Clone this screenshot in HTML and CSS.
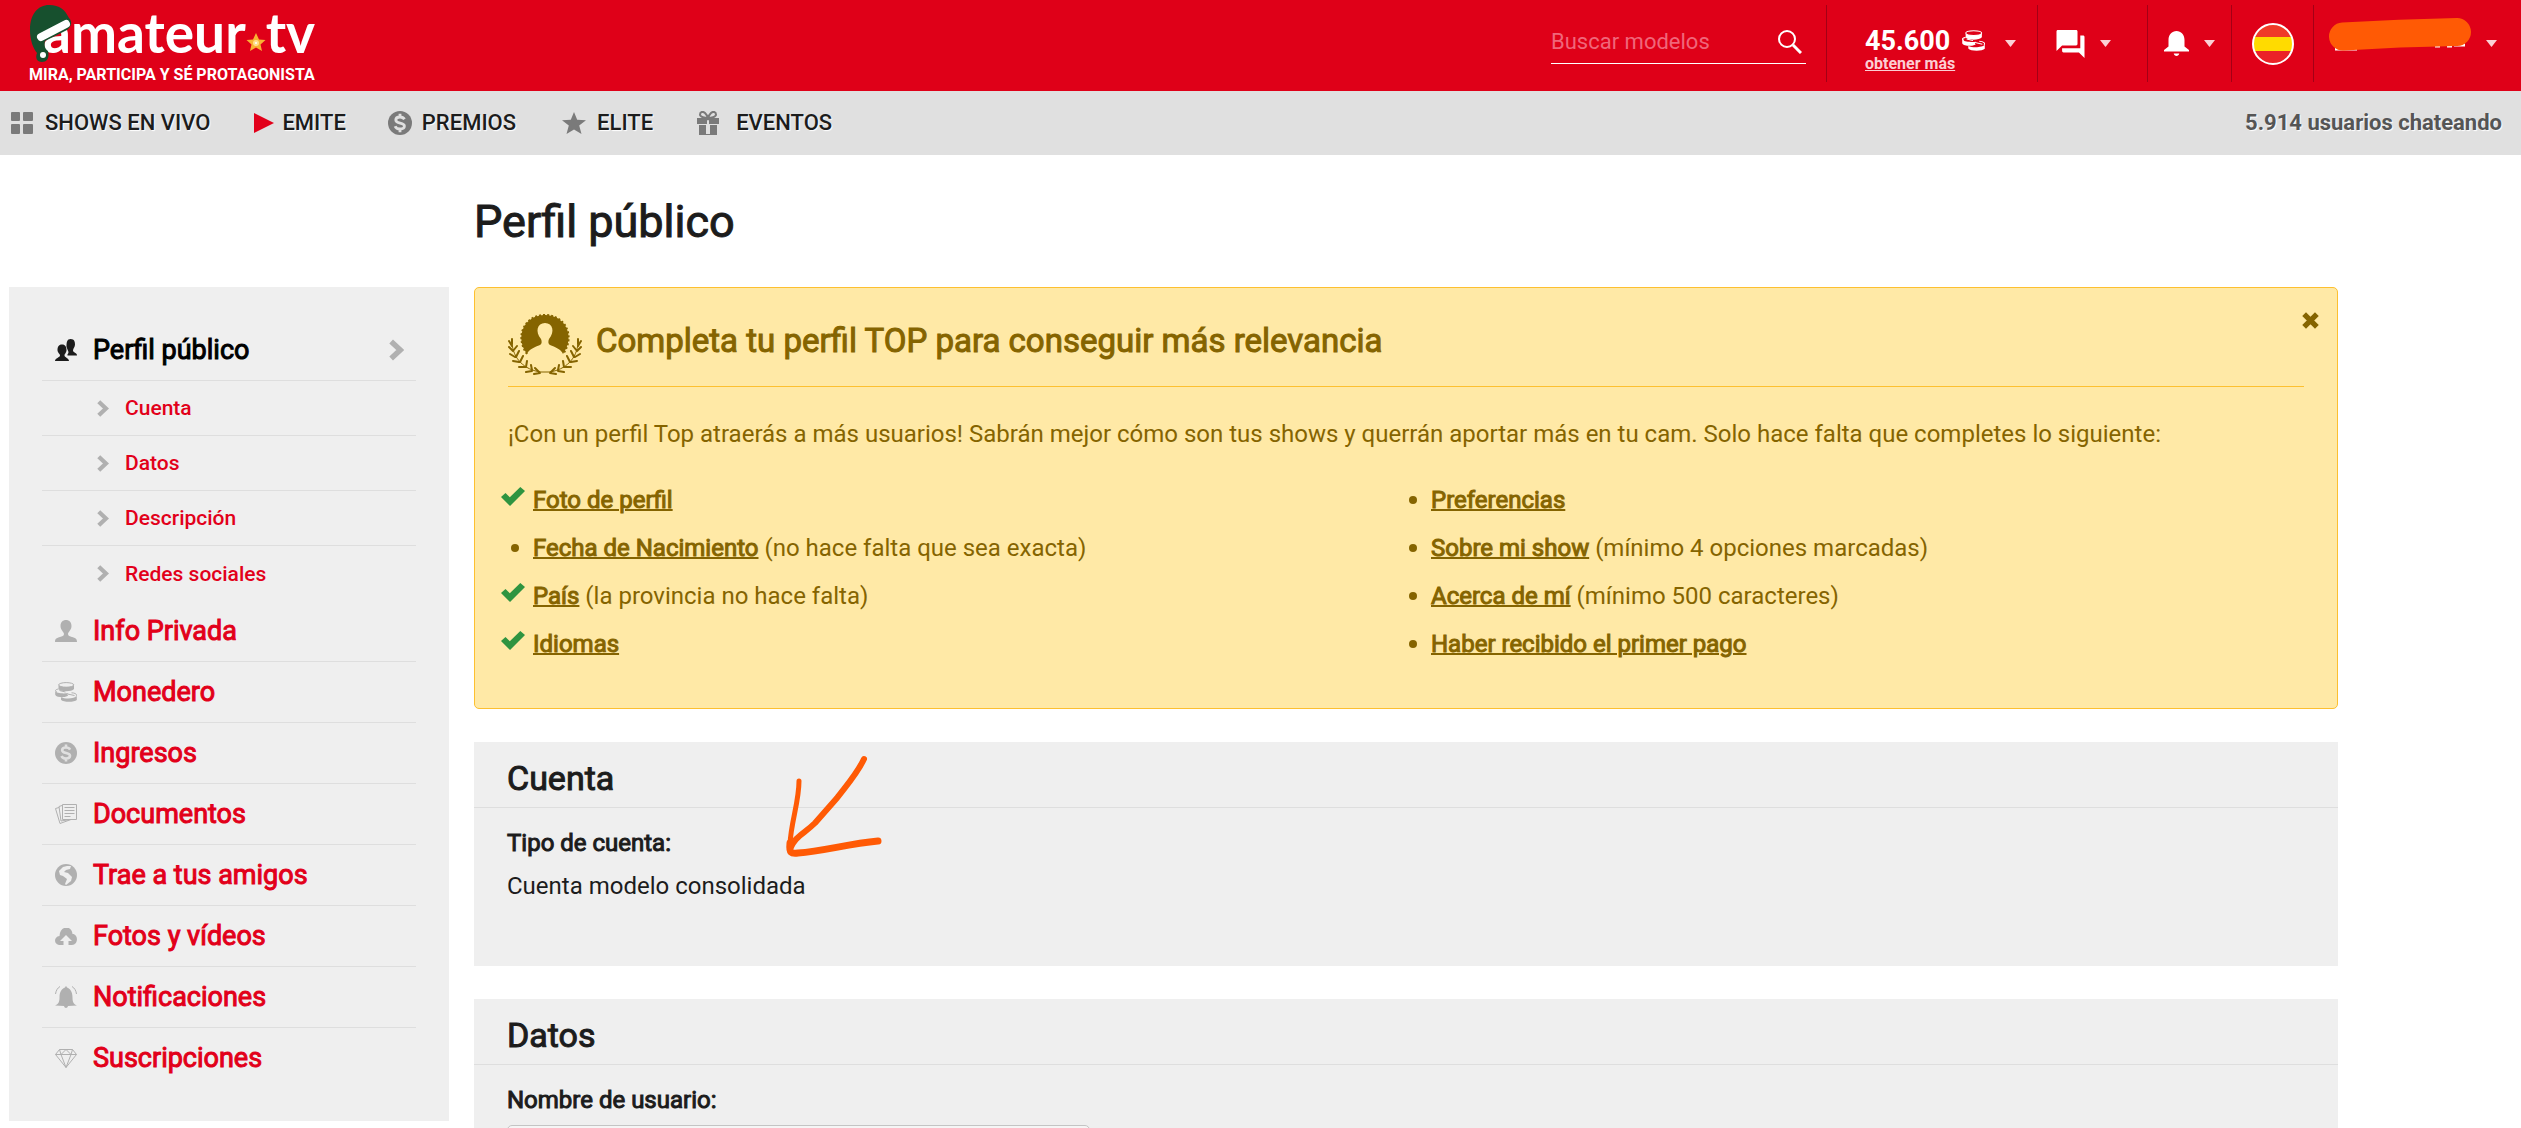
FILE: index.html
```html
<!DOCTYPE html>
<html lang="es">
<head>
<meta charset="utf-8">
<title>Perfil público - amateur.tv</title>
<meta name="viewport" content="width=device-width, initial-scale=1">
<link rel="stylesheet" href="styles.css">
</head>
<body>
<svg class="sprite" aria-hidden="true">
  <symbol id="coins" viewBox="0 0 22 20">
    <g fill="currentColor">
      <path d="M3.500 3.200v3.800c1.500 2.900 13.500 2.900 15.500 0V3.200c-2 2.500-14 2.500-15.500 0z"/>
      <path d="M.2 9.100v3.600c1 2.300 6 2.700 9.500 2.300l3.500-1.200c-1.200-.8-1-2 .3-2.700-5 .6-12.300.4-13.300-2z"/>
      <path d="M6 15.200v2.500c2 2.800 13.600 2.700 15.800.3v-3.900c-2 2.500-11.200 3.200-15.800 1.100z"/>
    </g>
    <g fill="none" stroke="currentColor">
      <ellipse cx="11.200" cy="2.900" rx="7.600" ry="2.300"/>
      <path d="M3.500 7c-3.500.6-4 2-1.500 3M4.500 8.500l6 1.500"/>
      <path d="M16.500 10.800c4.500.2 6 2 4.500 3.500M12.500 12l7 1.500"/>
    </g>
  </symbol>
  <symbol id="dollar" viewBox="0 0 24 24">
    <circle cx="12" cy="12" r="12" fill="currentColor"/>
    <path class="knock" d="M16.500 8.300C15.500 6.600 14 6 12 6 9.500 6 7.800 7.200 7.800 9c0 4.200 8.600 1.900 8.600 6 0 1.900-1.800 3-4.400 3-2.400 0-4.200-1-4.900-2.800M12 2.800v3.500M12 17.800v3.500" fill="none" stroke-width="2.800"/>
  </symbol>
  <symbol id="chevron" viewBox="0 0 14 20">
    <path d="M2 2l8.500 8L2 18" fill="none" stroke="currentColor" stroke-width="5"/>
  </symbol>
  <symbol id="check" viewBox="0 0 24 19" preserveAspectRatio="none">
    <path d="M0 10l4.500-4 4.300 4.200L19.300 0 24 4 9 19z" fill="currentColor"/>
  </symbol>
  <symbol id="caret" viewBox="0 0 11 7">
    <path d="M0 0h11L5.500 7z" fill="currentColor"/>
  </symbol>
</svg>

<header class="topbar">
  <a class="brand" href="#">
    <span class="wordmark">
      <svg class="hat" viewBox="0 0 44 58" aria-hidden="true">
        <path d="M1 26C1 10 9 1 20 1c11 0 16 5 20 13 4 4 2 9-2 12L16 37c-1 5 0 8 3 10 2 8-2 11-6 11-5 0-7-4-5-9C4 44 1 36 1 26z" fill="#17502e"/>
        <path d="M12 33L37 20" stroke="#fff" stroke-width="8" stroke-linecap="round"/>
        <circle cx="14" cy="51" r="3" fill="#fff"/>
      </svg>
      <span>amateur</span>
      <svg class="star" viewBox="0 0 20 20" aria-hidden="true">
        <path d="M10 1l3 6.500 6.500.500-5 4.500 1.500 6.500-6-3.500L4 19l1.500-6.500-5-4.500L7 7.500z" fill="#f9b233"/>
        <circle cx="10" cy="11" r="3" fill="#ffe08a"/>
        <circle cx="10" cy="11" r="1" fill="#fff"/>
      </svg>
      <span>tv</span>
    </span>
    <span class="tagline">MIRA, PARTICIPA Y SÉ PROTAGONISTA</span>
  </a>

  <form class="search" role="search">
    <input type="search" aria-label="Buscar modelos" placeholder="Buscar modelos">
    <button type="submit" aria-label="Buscar">
      <svg width="24" height="24" viewBox="0 0 24 24"><circle cx="9" cy="9" r="8" fill="none" stroke="#fff" stroke-width="2"/><path d="M15 15l8 8" stroke="#fff" stroke-width="3"/></svg>
    </button>
  </form>

  <div class="tools">
    <div class="tool wallet">
      <div>
        <div class="balance">45.600 <svg width="23" height="21"><use href="#coins"/></svg></div>
        <a href="#">obtener más</a>
      </div>
      <button type="button" class="drop" aria-label="Monedero"><svg width="11" height="7"><use href="#caret"/></svg></button>
    </div>
    <button type="button" class="tool chat" aria-label="Mensajes">
      <svg width="29" height="28" viewBox="2 2 20 20"><path d="M21 6h-2v9H6v2c0 .55.45 1 1 1h11l4 4V7c0-.55-.45-1-1-1zm-4 6V3c0-.55-.45-1-1-1H3c-.55 0-1 .45-1 1v14l4-4h10c.55 0 1-.45 1-1z" fill="#fff"/></svg>
      <svg class="caret" width="11" height="7"><use href="#caret"/></svg>
    </button>
    <button type="button" class="tool alerts" aria-label="Avisos">
      <svg width="25" height="26" viewBox="0 0 25 26"><path d="M0 20.500v-1.500l4.500-3.500V9C4.500 3.500 8 0 12.500 0S20.500 3.500 20.500 9v6.500L25 19v1.500zM9.700 22.500h5.600c-.5 3.300-5.100 3.300-5.600 0z" fill="#fff"/></svg>
      <svg class="caret" width="11" height="7"><use href="#caret"/></svg>
    </button>
    <button type="button" class="tool lang" aria-label="Español">
      <svg width="42" height="42" viewBox="0 0 42 42"><clipPath id="round"><circle cx="21" cy="21" r="20"/></clipPath><g clip-path="url(#round)"><path fill="#f03a28" d="M0 0h42v14H0z"/><path fill="#ffdb00" d="M0 14h42v14H0z"/><path fill="#eb2228" d="M0 28h42v14H0z"/></g><circle cx="21" cy="21" r="20" fill="none" stroke="#fff" stroke-width="2"/></svg>
    </button>
    <button type="button" class="tool user" aria-label="Usuario">
      <svg width="143" height="34" viewBox="0 0 143 34"><path d="M6 31h22M106 28h5M118 28h5M125 27h11" stroke="#fff" stroke-width="3"/><path d="M14 18.500Q70 15 128 14" fill="none" stroke="#ff5a05" stroke-width="28" stroke-linecap="round"/></svg>
      <svg class="caret" width="11" height="7"><use href="#caret"/></svg>
    </button>
  </div>
</header>

<nav class="mainnav">
  <a href="#"><svg width="22" height="22" viewBox="0 0 22 22"><path d="M1 0h7q1 0 1 1v7q0 1-1 1H1Q0 9 0 8V1q0-1 1-1zM13 0h8q1 0 1 1v7q0 1-1 1h-8q-1 0-1-1V1q0-1 1-1zM1 12h7q1 0 1 1v8q0 1-1 1H1q-1 0-1-1v-8q0-1 1-1zM13 12h8q1 0 1 1v8q0 1-1 1h-8q-1 0-1-1v-8q0-1 1-1z" fill="currentColor"/></svg>SHOWS EN VIVO</a>
  <a href="#" class="emit"><svg width="20" height="20" viewBox="0 0 20 20"><path d="M0 0l20 10L0 20z" fill="#e2001a"/></svg>EMITE</a>
  <a href="#" class="prizes"><svg width="24" height="24"><use href="#dollar"/></svg>PREMIOS</a>
  <a href="#" class="elite"><svg width="24" height="22" viewBox="0 0 24 22"><path d="M12 0l3.200 7.700 8.800.6-6.800 5.300L19.500 22 12 17.500 4.500 22l2.300-8.400L0 8.300l8.800-.6z" fill="currentColor"/></svg>ELITE</a>
  <a href="#" class="events"><svg width="22" height="24" viewBox="0 0 22 24"><path d="M0 7h22v6H12V9h-2v4H0zM2 14h7v9h4v-9h7v10H2z" fill="currentColor"/><path d="M11 7C8 7 3 6 3 3.500S6 0 8 2s3 5 3 5 1-3 3-5 5-1 5 1.500S14 7 11 7z" fill="none" stroke="currentColor" stroke-width="2"/></svg>EVENTOS</a>
  <p class="online">5.914 usuarios chateando</p>
</nav>

<div class="page">
  <h1>Perfil público</h1>

  <aside class="sidebar">
    <ul class="menu">
      <li class="current"><a href="#"><svg width="22" height="22" viewBox="0 0 22 22"><g fill="currentColor"><path d="M12.500 16.500c-.5-1.500 1-1.500 1-3.500L11.500 8c0-5 .5-8 4.200-8S20 3 20 5.500 18 9.500 18 11.500s4 2 4 5z"/><path d="M0 22c0-3 5-3.500 5-5.500S2.500 14 2.500 11 3.500 5.500 7 5.500s4.500 2.500 4.500 5.500-2 3.500-2 5.500 4.500 2.500 4.500 5.500z"/></g></svg>Perfil público<svg class="end" width="15" height="22"><use href="#chevron"/></svg></a></li>
      <li class="sub"><a href="#cuenta"><svg width="12" height="17"><use href="#chevron"/></svg>Cuenta</a></li>
      <li class="sub"><a href="#datos"><svg width="12" height="17"><use href="#chevron"/></svg>Datos</a></li>
      <li class="sub"><a href="#"><svg width="12" height="17"><use href="#chevron"/></svg>Descripción</a></li>
      <li class="sub last"><a href="#"><svg width="12" height="17"><use href="#chevron"/></svg>Redes sociales</a></li>
      <li><a href="#"><svg width="22" height="22" viewBox="0 0 22 22"><path d="M0 22c0-4 2-4 5-5 2-.7 4-1 4-3S5.500 10 5.500 6 8 0 11 0s5.500 2 5.500 6S13 12 13 14s2 2.300 4 3c3 1 5 1 5 5z" fill="currentColor"/></svg>Info Privada</a></li>
      <li><a href="#"><svg width="22" height="20"><use href="#coins"/></svg>Monedero</a></li>
      <li><a href="#"><svg width="22" height="22"><use href="#dollar"/></svg>Ingresos</a></li>
      <li><a href="#"><svg width="22" height="20" viewBox="0 0 22 20"><g fill="none" stroke="currentColor"><path d="M7.500.5h14v15h-14zM7 1.500l-3 1 2 14.500 9-1.500M4 3.500l-3.500 1L5 19.500l11-4"/><path d="M9.500 3.500h10M9.500 6.500h10M9.500 9.500h10M9.500 12.500h6"/></g></svg>Documentos</a></li>
      <li><a href="#"><svg width="22" height="22" viewBox="0 0 22 22"><circle cx="11" cy="11" r="11" fill="currentColor"/><path class="land" d="M12 2L8 3 4 7l1 4 3 1 4 3-2 5 1 1 5-4 1-4-4-4-4-1 2-2 4-1 1-3z"/></svg>Trae a tus amigos</a></li>
      <li><a href="#"><svg width="22" height="17" viewBox="0 0 22 17"><path d="M5 17c-6 0-7-8-.500-9C5-3 17-3 17.500 6c6 0 6 11-.5 11h-3.500v-4H17l-6-6-6 6h3.500v4z" fill="currentColor"/></svg>Fotos y vídeos</a></li>
      <li><a href="#"><svg width="22" height="22" viewBox="0 0 22 22"><path d="M0 19.500c3-1 4.500-3 4.500-8C4.500 5 7 3 10 1.500 10.500-.2 11.500-.2 12 1.500c3 1.500 5.500 3.500 5.500 10 0 5 1.500 7 4.500 8l-9 .5c-.5 2.500-3.500 2.500-4 0z" fill="currentColor"/><path d="M5 .5C2.500 2 1 4.500.5 8M17 .5C19.500 2 21 4.500 21.500 8" fill="none" stroke="currentColor"/></svg>Notificaciones</a></li>
      <li class="last"><a href="#"><svg width="22" height="19" viewBox="0 0 22 19"><path d="M4.500.5h13l4 5L11 18.500.5 5.500zM.5 5.500h21M11 18.500L6 5.500 11 .5l5 5zM4.500.5L6 5.500M17.500.5L16 5.500" fill="none" stroke="currentColor"/></svg>Suscripciones</a></li>
    </ul>
  </aside>

  <main class="content">
    <section class="notice">
      <button type="button" class="close" aria-label="Cerrar"><svg width="17" height="17" viewBox="0 0 16 16"><path d="M2 2l12 12M14 2L2 14" stroke="currentColor" stroke-width="5"/></svg></button>
      <h2>
        <svg width="74" height="62" viewBox="0 0 74 62" aria-hidden="true">
          <path d="M19 41C6 23 17 2 37 2s31 21 18 39c-2-5-8-7-13-9-2-1-2-4-1-6 6-7 4-16-4-16s-10 9-4 16c1 2 1 5-1 6-5 2-11 4-13 9z" fill="currentColor"/>
          <path d="M19 41C6 23 17 2 37 2s31 21 18 39" fill="none" stroke="currentColor" stroke-width="2" stroke-dasharray="2 2"/>
          <path d="M4 30C5 45 16 57 33 59h8C58 57 69 45 70 30" fill="none" stroke="currentColor"/>
          <path d="M4 33l-3-5M4 31V26M5 38l-4-4M5 38l4-5M7 44l-5-3M8 44l3-6M11 49l-6-1M12 49l3-6M17 54l-6 0M18 54l1-6M24 58l-6 1M24 57l-1-5M32 60l-6 1M31 59l-4-4M70 33l3-5M70 31V26M69 38l4-4M69 38l-4-5M67 44l5-3M66 44l-3-6M63 49l6-1M62 49l-3-6M57 54h6M56 54l-1-6M50 58l6 1M50 57l1-5M42 60l6 1M43 59l4-4" stroke="currentColor" stroke-width="2" stroke-linecap="round"/>
        </svg>
        Completa tu perfil TOP para conseguir más relevancia
      </h2>
      <p>¡Con un perfil Top atraerás a más usuarios! Sabrán mejor cómo son tus shows y querrán aportar más en tu cam. Solo hace falta que completes lo siguiente:</p>
      <div class="columns">
        <ul>
          <li><svg width="24" height="19"><use href="#check"/></svg><span><a href="#">Foto de perfil</a></span></li>
          <li><i class="dot"></i><span><a href="#">Fecha de Nacimiento</a> (no hace falta que sea exacta)</span></li>
          <li><svg width="24" height="19"><use href="#check"/></svg><span><a href="#">País</a> (la provincia no hace falta)</span></li>
          <li><svg width="24" height="19"><use href="#check"/></svg><span><a href="#">Idiomas</a></span></li>
        </ul>
        <ul>
          <li><i class="dot"></i><span><a href="#">Preferencias</a></span></li>
          <li><i class="dot"></i><span><a href="#">Sobre mi show</a> (mínimo 4 opciones marcadas)</span></li>
          <li><i class="dot"></i><span><a href="#">Acerca de mí</a> (mínimo 500 caracteres)</span></li>
          <li><i class="dot"></i><span><a href="#">Haber recibido el primer pago</a></span></li>
        </ul>
      </div>
    </section>

    <section class="panel" id="cuenta">
      <h2>Cuenta</h2>
      <dl>
        <dt>Tipo de cuenta:</dt>
        <dd>Cuenta modelo consolidada</dd>
      </dl>
      <svg class="arrow" width="104" height="108" viewBox="0 0 104 108" aria-hidden="true">
        <g fill="none" stroke="#ff5a05" stroke-linecap="round" stroke-linejoin="round">
          <path d="M84 7C76 24 64 37 54 51C42 67 30 75 10 92" stroke="none"/>
          <path d="M84 7C77 22 66 34 57 46L35 71C24 82 15 84 10 97" stroke-width="6"/>
          <path d="M19 29C19 50 11 70 10 92" stroke-width="5"/>
          <path d="M10 91C9 101 11 102 18 101C44 99 67 92 98 89" stroke-width="7"/>
        </g>
      </svg>
    </section>

    <section class="panel" id="datos">
      <h2>Datos</h2>
      <div class="field">
        <label for="usuario">Nombre de usuario:</label>
        <input type="text" id="usuario">
      </div>
    </section>
  </main>
</div>
</body>
</html>
```
FILE: styles.css
```css
* { box-sizing: border-box; }

body {
  margin: 0;
  font-family: Roboto, "Liberation Sans", sans-serif;
  font-size: 24px;
  line-height: 32px;
  color: #1c1c1c;
  background: #fff;
  overflow-x: hidden;
}

h1, h2, p, ul, dl, dd { margin: 0; padding: 0; }
h1, h2, dt, label, .menu a, .notice a { font-weight: 400; -webkit-text-stroke: 1px currentColor; }
ul { list-style: none; }
a { color: inherit; text-decoration: none; }
button { margin: 0; padding: 0; border: 0; background: none; font: inherit; color: inherit; cursor: pointer; }
svg { flex: none; display: block; }
.sprite { position: absolute; width: 0; height: 0; }

/* Top bar */
.topbar { display: flex; align-items: stretch; height: 91px; background: #df0018; color: #fff; }
.brand { display: flex; flex-direction: column; padding: 4px 0 0 29px; margin-right: auto; }
.wordmark { position: relative; display: flex; align-items: flex-start; height: 61px; padding-left: 14px; font-family: Lato, sans-serif; font-size: 55px; font-weight: 700; line-height: 56px; }
.wordmark .hat { position: absolute; left: 0; top: 0; width: 44px; height: 58px; }
.wordmark .star { width: 20px; height: 20px; margin-top: 28px; }
.tagline { font-size: 16px; font-weight: 700; line-height: 20px; }
.search { display: flex; align-items: center; width: 255px; height: 44px; margin: 20px 20px 0 0; padding-right: 4px; border-bottom: 1px solid #fff; }
.search input { flex: 1; min-width: 0; padding: 0; border: 0; outline: 0; background: none; font: 22px/28px Roboto, sans-serif; color: #fff; }
.search input::placeholder { color: #f0667a; opacity: 1; }
.tools { display: flex; padding: 5px 0 9px; }
.tool { display: flex; align-items: center; border-left: 1px solid #a30016; color: #fff; }
.tool .caret, .drop { color: #fbd0d5; }
.wallet { width: 211px; padding-left: 38px; }
.wallet > div { width: 140px; padding-top: 16px; }
.balance { display: flex; gap: 12px; align-items: center; font-size: 27px; font-weight: 700; line-height: 24px; }
.wallet a { display: block; font-size: 16px; font-weight: 700; line-height: 22px; color: #fccdd3; text-decoration: underline; }
.chat { width: 110px; padding-left: 18px; gap: 15px; }
.alerts { width: 84px; padding-left: 16px; gap: 15px; }
.lang { width: 82px; padding-left: 20px; }
.user { width: 208px; padding-left: 15px; gap: 14px; }
.user svg:first-child { margin-bottom: 18px; }

/* Main navigation */
.mainnav { display: flex; align-items: center; height: 64px; padding: 0 19px 0 11px; background: #e0e0e0; font-size: 22px; text-shadow: 1px 1px 1px #fff; }
.mainnav a { display: flex; align-items: center; gap: 12px; margin-right: 44px; font-weight: 500; }
.mainnav svg { color: #7a7a7a; }
.mainnav .emit { gap: 8px; margin-right: 42px; }
.mainnav .prizes { gap: 10px; margin-right: 46px; }
.mainnav .elite { gap: 11px; }
.mainnav .events { gap: 17px; }
.online { margin-left: auto; font-size: 22px; font-weight: 700; color: #555; }
.knock { stroke: #e0e0e0; }
.sidebar .knock { stroke: #efefef; }

/* Page grid */
.page { display: grid; grid-template-columns: 440px minmax(0, 1fr); column-gap: 25px; align-items: start; padding: 0 183px 33px 9px; }
h1 { grid-column: 2; padding: 37px 0 35px; font-size: 45px; line-height: 60px; }

/* Side menu */
.sidebar { padding: 33px; background: #efefef; color: #b0b0b0; }
.menu li { border-bottom: 1px solid #dedede; }
.menu .last { border-bottom: 0; }
.menu a { display: flex; align-items: center; gap: 16px; height: 60px; padding: 0 12px 0 13px; font-size: 27px; color: #e2001a; }
.menu svg { color: #b0b0b0; }
.menu .land { fill: #efefef; }
.menu .current a { color: #000; }
.menu .current svg { color: #1c1c1c; }
.menu .current .end { margin-left: auto; color: #b0b0b0; }
.menu .sub a { height: 54px; padding-left: 55px; font-size: 21px; font-weight: 500; -webkit-text-stroke: 0; }
.menu .sub.last a { height: 55px; }

/* Notice */
.content { display: grid; gap: 33px; }
.notice { position: relative; padding: 20px 33px 40px; border: 1px solid #fdc030; border-radius: 5px; background: #ffe9a6; color: #856400; }
.notice h2 { display: flex; align-items: center; gap: 14px; height: 79px; padding-bottom: 12px; border-bottom: 1px solid #fdc030; font-size: 33px; line-height: 40px; }
.notice h2 svg { margin-top: 5px; }
.notice p { padding: 31px 0 26px; }
.notice .close { position: absolute; top: 24px; right: 18px; }
.columns { display: grid; grid-template-columns: 1fr 1fr; }
.columns li { display: grid; grid-template-columns: 25px 1fr; height: 48px; align-items: center; }
.columns li svg { margin: 0 0 8px -7px; color: #2f9440; }
.columns a { text-decoration: underline; text-decoration-thickness: 2px; }
.dot { width: 8px; height: 8px; margin-left: 3px; border-radius: 50%; background: currentColor; }

/* Panels */
.panel { position: relative; background: #efefef; }
.panel h2 { padding: 16px 33px 8px; border-bottom: 1px solid #dedede; font-size: 34px; line-height: 41px; }
.panel dl, .field { padding: 18px 33px 61px; }
.panel dt, .field label { display: block; padding-bottom: 8px; line-height: 34px; }
.panel dd { line-height: 37px; }
.field input { display: block; width: 100%; max-width: 583px; height: 44px; padding: 0 12px; border: 1px solid #c4c4c4; border-radius: 5px; background: #f5f5f5; font: inherit; }
.arrow { position: absolute; left: 306px; top: 10px; }
```
